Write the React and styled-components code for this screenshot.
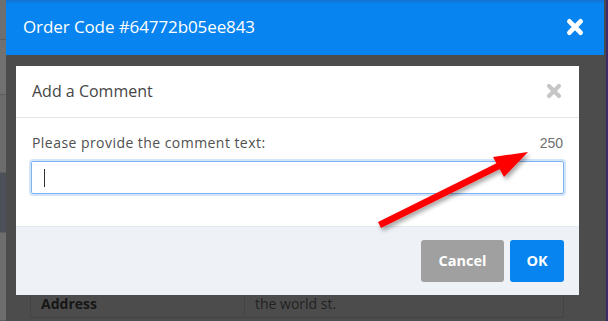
import React from "react";
import styled, { createGlobalStyle } from "styled-components";

const Global = createGlobalStyle`
  html, body {
    margin: 0;
    padding: 0;
    width: 608px;
    height: 321px;
    overflow: hidden;
    background: #4b4b4b;
  }
  * {
    box-sizing: border-box;
  }
`;

const Page = styled.div`
  position: relative;
  display: flex;
  width: 608px;
  height: 321px;
  font-family: "Open Sans", "Liberation Sans", sans-serif;
`;

const BackStrip = styled.div`
  width: 6px;
  display: flex;
  flex-direction: column;
  background: #6d6d6d;
`;

const StripBand = styled.div`
  height: ${(p) => p.h}px;
  background: ${(p) => p.bg};
  border-bottom: 1px solid #5e5e5e;
`;

const RightStrip = styled.div`
  width: 4px;
  background: #4b4b4b;
  border-right: 2px solid #3c2a6a;
`;

const OuterModal = styled.div`
  flex: 1;
  display: flex;
  flex-direction: column;
  background: #4c4c4c;
`;

const OuterHeader = styled.div`
  height: 55px;
  flex-shrink: 0;
  display: flex;
  align-items: center;
  justify-content: space-between;
  padding: 0 20px 2px 17px;
  background: linear-gradient(#1570d2 0, #0784f0 4px, #0784f0 100%);
  color: #fff;
  font-size: 17px;
  font-weight: 500;
  letter-spacing: -0.1px;
`;

const OuterBody = styled.div`
  flex: 1;
  display: flex;
  flex-direction: column;
  padding: 11px 25px 0 10px;
`;

const Dialog = styled.div`
  background: #fff;
  display: flex;
  flex-direction: column;
`;

const DialogHeader = styled.div`
  height: 52px;
  display: flex;
  align-items: center;
  justify-content: space-between;
  padding: 0 17px 1px 16px;
  border-bottom: 1px solid #e4e4e4;
  font-size: 16px;
  color: #454545;
`;

const DialogBody = styled.div`
  padding: 15px 15px 32px 15px;
  display: flex;
  flex-direction: column;
  gap: 8px;
`;

const LabelRow = styled.div`
  display: flex;
  justify-content: space-between;
  align-items: center;
  padding: 0 1px 0 1px;
  font-size: 14px;
  letter-spacing: 0.45px;
  color: #505050;
`;

const Counter = styled.span`
  font-family: "Liberation Sans", Arial, sans-serif;
  font-size: 14px;
  letter-spacing: 0;
  color: #707070;
`;

const InputBox = styled.div`
  height: 33px;
  margin-top: 1px;
  border: 1px solid #7fb2ef;
  box-shadow: 0 0 0 2px #d3e5fb;
  border-radius: 2px;
  display: flex;
  align-items: center;
  padding-left: 12px;
`;

const Caret = styled.span`
  width: 1px;
  height: 18px;
  background: #333;
`;

const Footer = styled.div`
  height: 69px;
  background: #eef1f6;
  border-top: 1px solid #e3e7ee;
  display: flex;
  align-items: center;
  justify-content: flex-end;
  gap: 6px;
  padding: 0 15px 1px 0;
`;

const Button = styled.button`
  height: 42px;
  width: ${(p) => p.w}px;
  border: none;
  border-radius: 3px;
  background: ${(p) => (p.primary ? "#0784f0" : "#a0a0a0")};
  color: #fff;
  font-family: "Open Sans", "Liberation Sans", sans-serif;
  font-size: 14.5px;
  font-weight: 700;
  padding: 0;
`;

const TableRow = styled.div`
  display: flex;
  margin: 0 15px 0 14px;
  height: 23px;
  border-bottom: 1px solid #444;
  border-left: 1px solid #444;
  border-right: 1px solid #444;
`;

const Cell = styled.div`
  width: ${(p) => p.w}px;
  display: flex;
  align-items: center;
  padding: 0 0 6px 10px;
  font-size: 14px;
  font-weight: ${(p) => (p.bold ? 700 : 400)};
  border-right: ${(p) => (p.divider ? "1px solid #444" : "none")};
  color: ${(p) => (p.bold ? "#161616" : "#222")};
`;

const ArrowLayer = styled.svg`
  position: absolute;
  left: 0;
  top: 0;
  pointer-events: none;
`;

const CloseIcon = ({ size, color }) => (
  <svg width={size} height={size} viewBox="0 0 16 16">
    <path
      d="M3 3 L13 13 M13 3 L3 13"
      stroke={color}
      strokeWidth="4.2"
      strokeLinecap="round"
    />
  </svg>
);

export default function App() {
  return (
    <>
      <Global />
      <Page>
        <BackStrip>
          <StripBand h={40} bg="#6f6f6f" />
          <StripBand h={55} bg="#717171" />
          <StripBand h={78} bg="#6c6c6c" />
          <StripBand h={60} bg="#4b5059" />
          <StripBand h={88} bg="#6e6e6e" />
        </BackStrip>
        <OuterModal>
          <OuterHeader>
            <span>Order Code #64772b05ee843</span>
            <CloseIcon size={18} color="#fff" />
          </OuterHeader>
          <OuterBody>
            <Dialog>
              <DialogHeader>
                <span>Add a Comment</span>
                <CloseIcon size={16} color="#c6c6c6" />
              </DialogHeader>
              <DialogBody>
                <LabelRow>
                  <span>Please provide the comment text:</span>
                  <Counter>250</Counter>
                </LabelRow>
                <InputBox>
                  <Caret />
                </InputBox>
              </DialogBody>
              <Footer>
                <Button w={83}>Cancel</Button>
                <Button w={54} primary>
                  OK
                </Button>
              </Footer>
            </Dialog>
            <TableRow>
              <Cell w={214} bold divider>
                Address
              </Cell>
              <Cell w={300}>the world st.</Cell>
            </TableRow>
          </OuterBody>
        </OuterModal>
        <RightStrip />
        <ArrowLayer width="608" height="321">
          <defs>
            <filter id="sh" x="-20%" y="-20%" width="140%" height="140%">
              <feDropShadow dx="2" dy="3" stdDeviation="2" floodColor="#000" floodOpacity="0.35" />
            </filter>
          </defs>
          <g filter="url(#sh)" fill="#ff0000">
            <path d="M378 222 L497 163 L500 169 L381 228 Z" />
            <path d="M528 152 L493 157 L504 177 Z" />
          </g>
        </ArrowLayer>
      </Page>
    </>
  );
}
